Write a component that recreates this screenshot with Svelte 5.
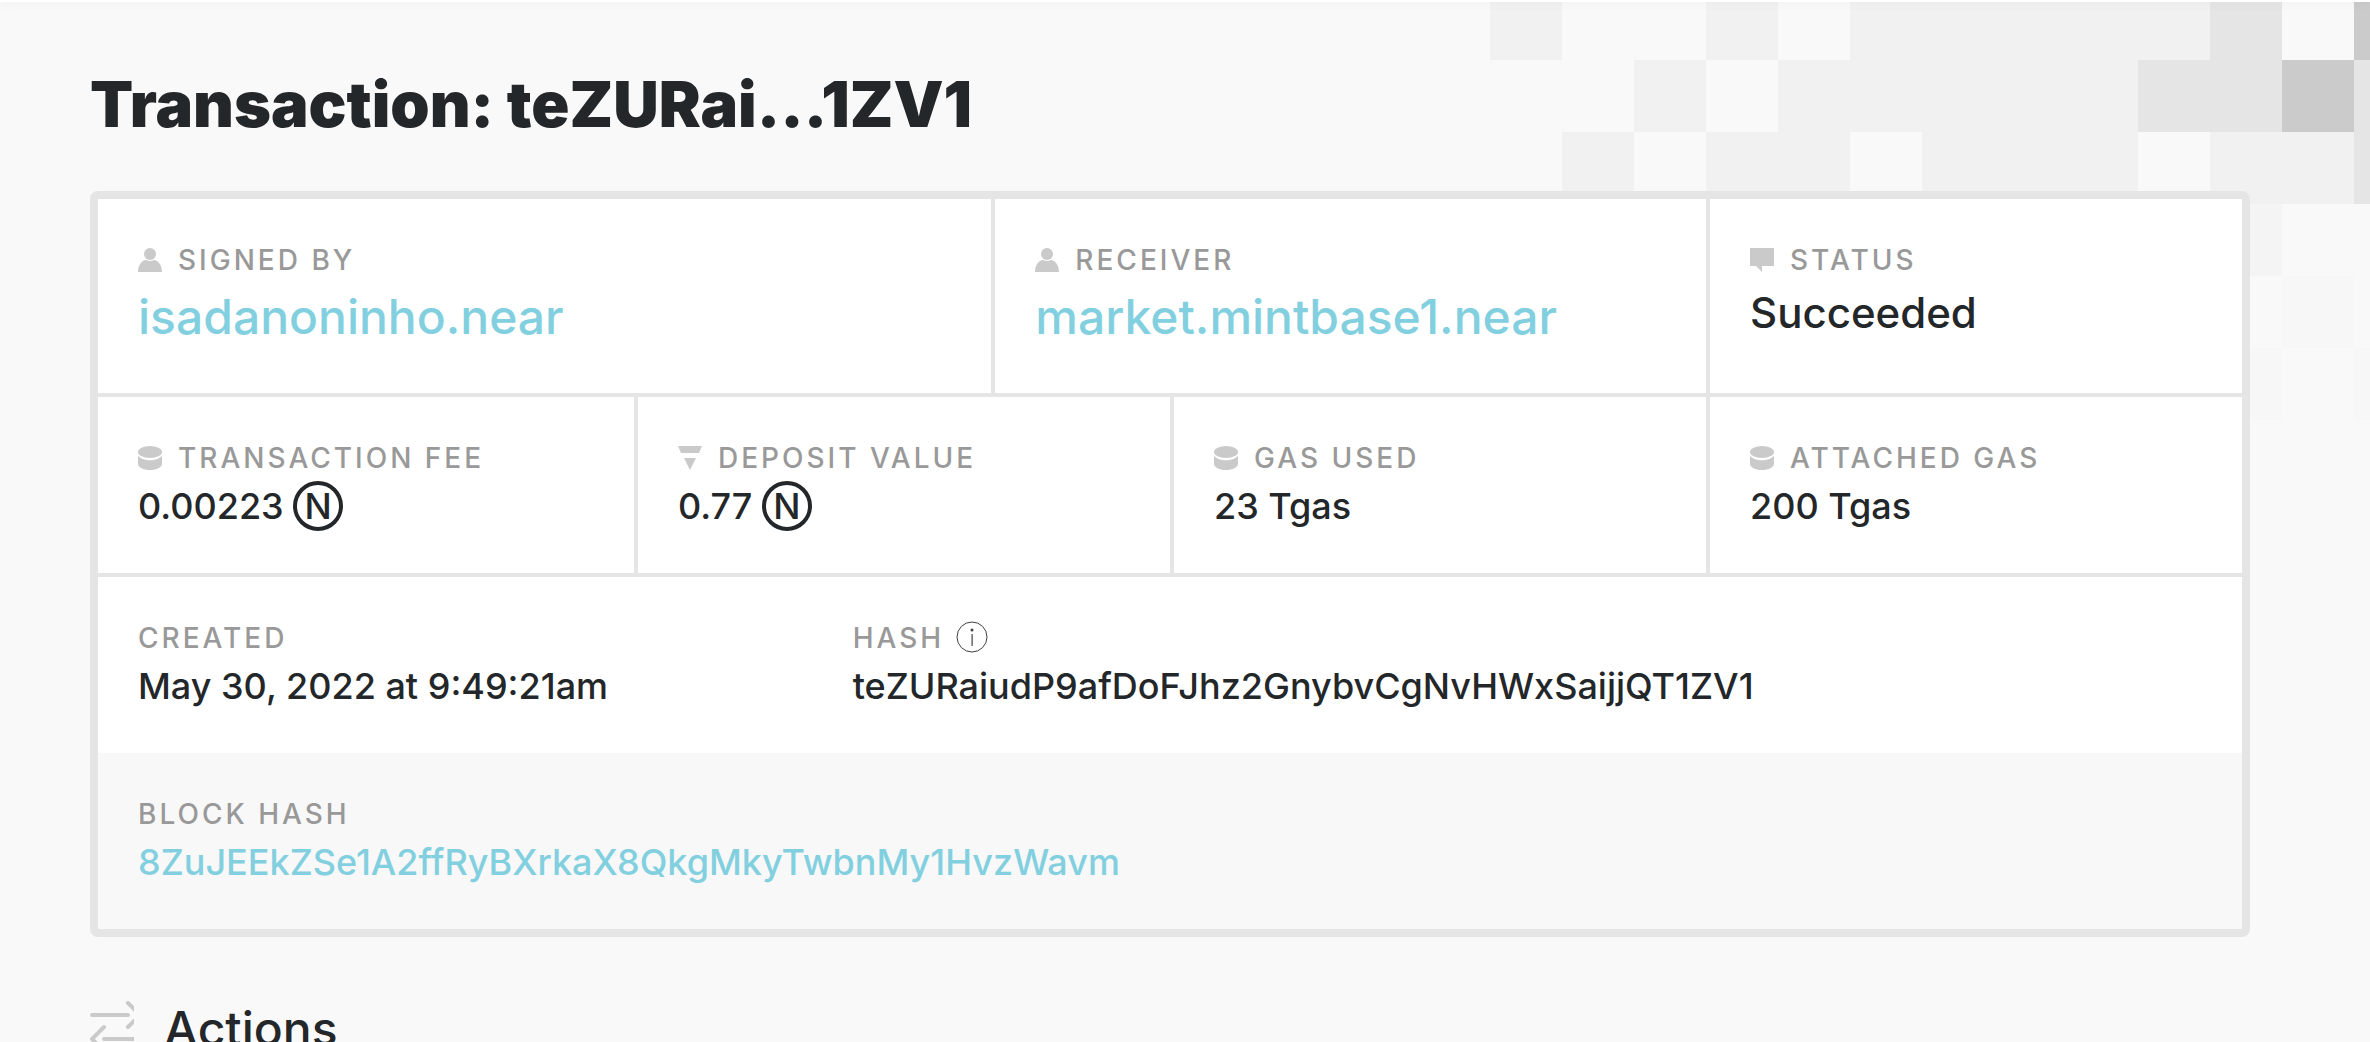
<script lang="ts">
  type Icon = 'user' | 'comment' | 'coins' | 'funnel'

  interface Tile {
    x: number
    y: number
    w: number
    fill: string
  }

  const transaction = {
    shortHash: 'teZURai...1ZV1',
    signer: 'isadanoninho.near',
    receiver: 'market.mintbase1.near',
    status: 'Succeeded',
    fee: '0.00223',
    deposit: '0.77',
    gasUsed: '23 Tgas',
    gasAttached: '200 Tgas',
    created: 'May 30, 2022 at 9:49:21am',
    hash: 'teZURaiudP9afDoFJhz2GnybvCgNvHWxSaijjQT1ZV1',
    blockHash: '8ZuJEEkZSe1A2ffRyBXrkaX8QkgMkyTwbnMy1HvzWavm'
  }

  // Background mosaic, in tile units (one tile is 72px)
  const tiles: Tile[] = [
    { x: 0, y: 0, w: 1, fill: '#f1f1f1' },
    { x: 3, y: 0, w: 1, fill: '#f1f1f1' },
    { x: 5, y: 0, w: 5, fill: '#f1f1f1' },
    { x: 10, y: 0, w: 1, fill: '#e5e5e5' },
    { x: 12, y: 0, w: 1, fill: '#cbcbcb' },
    { x: 2, y: 1, w: 1, fill: '#f1f1f1' },
    { x: 4, y: 1, w: 5, fill: '#f1f1f1' },
    { x: 9, y: 1, w: 2, fill: '#e5e5e5' },
    { x: 11, y: 1, w: 1, fill: '#cbcbcb' },
    { x: 12, y: 1, w: 1, fill: '#e5e5e5' },
    { x: 1, y: 2, w: 1, fill: '#f1f1f1' },
    { x: 3, y: 2, w: 2, fill: '#f1f1f1' },
    { x: 6, y: 2, w: 3, fill: '#f1f1f1' },
    { x: 10, y: 2, w: 2, fill: '#f1f1f1' },
    { x: 12, y: 2, w: 1, fill: '#e5e5e5' },
    { x: 10, y: 3, w: 1, fill: '#f4f4f4' },
    { x: 11, y: 4, w: 1, fill: '#f7f7f7' },
    { x: 10, y: 5, w: 1, fill: '#f7f7f7' },
    { x: 12, y: 5, w: 1, fill: '#f7f7f7' }
  ]
</script>

{#snippet label(text: string, icon?: Icon)}
  <dt class="label">
    {#if icon}
      <svg class="label-icon" viewBox="0 0 24 24" aria-hidden="true">
        {#if icon === 'user'}
          <circle cx="12" cy="6" r="6" />
          <path d="M0 24c0-7 4-12 8-12 2.500 1.200 5.500 1.200 8 0 4 0 8 5 8 12z" />
        {:else if icon === 'comment'}
          <path d="M0 0h24v18H12v6L6 18H0z" />
        {:else if icon === 'coins'}
          <ellipse cx="12" cy="6" rx="12" ry="6" />
          <path d="M0 9.500c2 3 6.500 4.800 12 4.800s10-1.800 12-4.800V18c0 3.300-5.400 6-12 6S0 21.300 0 18z" />
        {:else}
          <path d="M0 0h24l-3 7H3zM6 12h12l-6 12z" />
        {/if}
      </svg>
    {/if}
    {text}
  </dt>
{/snippet}

{#snippet near(amount: string)}
  <dd class="value">
    {amount}
    <span class="near-symbol">N</span>
  </dd>
{/snippet}

<div class="page">
  <svg class="mosaic" viewBox="0 0 880 432" aria-hidden="true">
    {#each tiles as tile}
      <rect x={tile.x * 72} y={tile.y * 72} width={tile.w * 72} height="72" fill={tile.fill} />
    {/each}
  </svg>
  <div class="navbar-edge"></div>

  <main class="container">
    <h1>Transaction: {transaction.shortHash}</h1>

    <dl class="card">
      <div class="row">
        <div class="cell span-5 tall">
          {@render label('Signed by', 'user')}
          <dd class="value account"><a href="#signer">{transaction.signer}</a></dd>
        </div>
        <div class="cell span-4 tall">
          {@render label('Receiver', 'user')}
          <dd class="value account"><a href="#receiver">{transaction.receiver}</a></dd>
        </div>
        <div class="cell span-3 tall">
          {@render label('Status', 'comment')}
          <dd class="value status">{transaction.status}</dd>
        </div>
      </div>

      <div class="row">
        <div class="cell span-3">
          {@render label('Transaction fee', 'coins')}
          {@render near(transaction.fee)}
        </div>
        <div class="cell span-3">
          {@render label('Deposit value', 'funnel')}
          {@render near(transaction.deposit)}
        </div>
        <div class="cell span-3">
          {@render label('Gas used', 'coins')}
          <dd class="value">{transaction.gasUsed}</dd>
        </div>
        <div class="cell span-3">
          {@render label('Attached gas', 'coins')}
          <dd class="value">{transaction.gasAttached}</dd>
        </div>
      </div>

      <div class="row plain">
        <div class="cell span-4">
          {@render label('Created')}
          <dd class="value">{transaction.created}</dd>
        </div>
        <div class="cell span-8">
          <dt class="label">
            Hash
            <button class="info" type="button" aria-label="About the hash">
              <svg viewBox="0 0 32 32" aria-hidden="true">
                <circle class="ring" cx="16" cy="15" r="15" />
                <circle cx="16" cy="8" r="1.500" />
                <path d="M15.500 12h1.200v12h-1.200z" />
              </svg>
            </button>
          </dt>
          <dd class="value">{transaction.hash}</dd>
        </div>
      </div>

      <div class="row shaded">
        <div class="cell span-12">
          {@render label('Block hash')}
          <dd class="value"><a href="#block">{transaction.blockHash}</a></dd>
        </div>
      </div>
    </dl>

    <h2>
      <svg class="actions-icon" viewBox="0 0 44 56" aria-hidden="true">
        <path d="M2 14h36M38 2l12 12-12 12M50 38H14M14 26L2 38l12 12" />
      </svg>
      Actions
    </h2>
  </main>
</div>

<style>
  :global(body) {
    margin: 0;
    background: #f9f9f9;
  }

  .page {
    position: relative;
    height: 100vh;
    overflow: hidden;
    font-family: Inter, 'Liberation Sans', sans-serif;
    font-weight: 500;
    color: #24272a;
  }

  .mosaic {
    position: absolute;
    top: -12px;
    right: 0;
    width: 880px;
    height: 432px;
  }

  .navbar-edge {
    position: relative;
    height: 2px;
    background: #fff;
    box-shadow: 0 0 12px rgba(0, 0, 0, 0.12);
  }

  .container {
    position: relative;
    margin: 0 120px 0 90px;
  }

  h1 {
    margin: 0;
    padding: 62px 0 47px;
    font-size: 63px;
    font-weight: 900;
    line-height: 80px;
  }

  .card {
    margin: 0;
    border: 8px solid #e5e5e5;
    border-radius: 8px;
    background: #fff;
  }

  .row {
    display: grid;
    grid-template-columns: repeat(12, 1fr);
  }

  .row + .row {
    border-top: 4px solid #e5e5e5;
  }

  .row.shaded {
    border-top: 0;
    background: #f8f8f8;
  }

  .cell {
    min-width: 0;
    padding: 40px;
    min-height: 96px;
  }

  .cell.tall {
    min-height: 114px;
  }

  .cell + .cell {
    border-left: 4px solid #e5e5e5;
  }

  .plain .cell + .cell {
    border-left: 0;
  }

  .span-3 {
    grid-column: span 3;
  }

  .span-4 {
    grid-column: span 4;
  }

  .span-5 {
    grid-column: span 5;
  }

  .span-8 {
    grid-column: span 8;
  }

  .span-12 {
    grid-column: span 12;
  }

  .label {
    display: flex;
    align-items: center;
    height: 42px;
    font-size: 28px;
    letter-spacing: 3px;
    text-transform: uppercase;
    color: #999;
  }

  .label-icon {
    width: 24px;
    height: 24px;
    margin-right: 16px;
    fill: #cacaca;
  }

  .value {
    margin: 0;
    font-size: 36px;
    line-height: 54px;
  }

  .value.account {
    font-size: 48px;
    line-height: 72px;
  }

  .value.status {
    font-size: 42px;
    line-height: 64px;
  }

  a {
    color: #82d0df;
    text-decoration: none;
  }

  .near-symbol {
    display: inline-flex;
    align-items: center;
    justify-content: center;
    box-sizing: border-box;
    width: 50px;
    height: 50px;
    border: 4px solid;
    border-radius: 50%;
    line-height: 42px;
  }

  .info {
    display: flex;
    width: 32px;
    height: 32px;
    margin-left: 12px;
    padding: 0;
    border: 0;
    background: none;
    color: #3f4246;
  }

  .info svg {
    width: 32px;
    height: 32px;
    overflow: visible;
    fill: currentColor;
  }

  .info .ring {
    fill: none;
    stroke: currentColor;
  }

  h2 {
    display: flex;
    align-items: center;
    gap: 30px;
    margin: 62px 0 0;
    font-size: 48px;
    font-weight: 500;
    line-height: 60px;
  }

  .actions-icon {
    width: 44px;
    height: 56px;
    fill: none;
    stroke: #cacaca;
    stroke-width: 4;
    stroke-linecap: round;
  }
</style>
